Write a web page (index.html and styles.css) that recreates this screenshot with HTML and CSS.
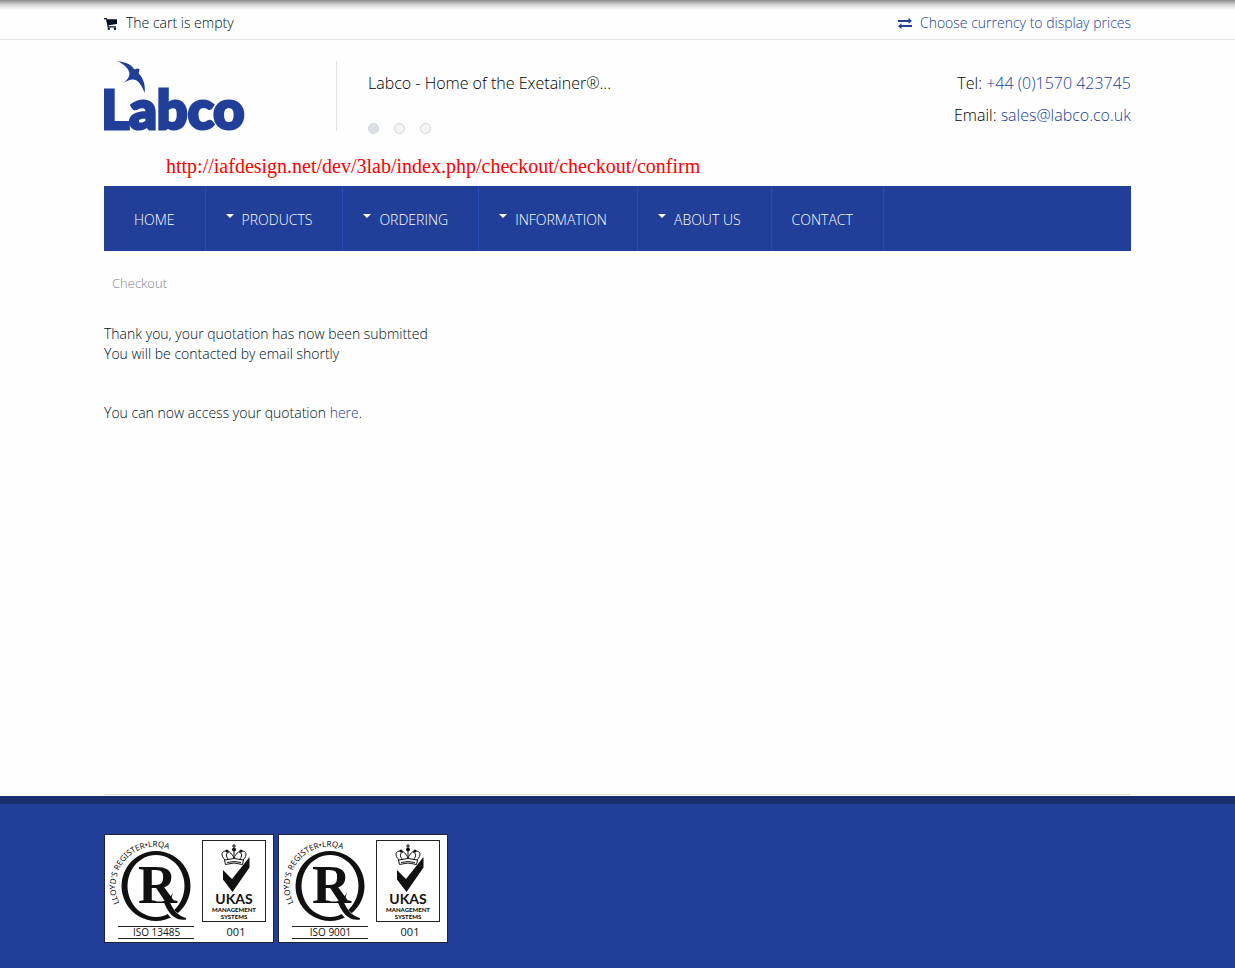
FILE: index.html
```html
<!DOCTYPE html>
<html lang="en">
<head>
  <meta charset="UTF-8">
  <meta name="viewport" content="width=device-width, initial-scale=1.0">
  <title>Checkout</title>
  <link rel="stylesheet" href="styles.css">
</head>
<body>

  <div class="top-bar">
    <div class="container top-inner">
      <div class="cart">
        <svg class="icon" viewBox="0 0 14 13" aria-hidden="true">
          <path d="M0 1h2.8l.4 1.2H13V7L4.600 8.200l.2 1H12v1.200H3.700L2 2.200H0z"/>
          <circle cx="4.8" cy="11.700" r="1.200"/>
          <circle cx="11" cy="11.700" r="1.200"/>
        </svg>
        <span>The cart is empty</span>
      </div>
      <a class="currency" href="#">
        <svg class="icon" viewBox="0 0 14 13" aria-hidden="true">
          <path d="M0 3h10.500V.8L14 4 10.500 6.800V5H0zM14 8H3.500V6.200L0 9.200l3.500 2.800V10H14z"/>
        </svg>
        <span>Choose currency to display prices</span>
      </a>
    </div>
  </div>

  <header class="container header">
    <a class="logo" href="#">
      <svg viewBox="0 0 160 80" width="160" height="80">
        <path d="M13 1c8 1 14 3 17 8 1 .5 2 .3 3-.5l2.500.5-.8 4.500c5 5 6.800 12 6 19.500-2-5-4.500-10-8-12.500-4-2-8-1-13.200 2.500 3-3 5.500-5 6-9C25 8 19 3.500 13 1z"/>
        <text class="logo-text" x="-3" y="69">Labco</text>
      </svg>
    </a>
    <div class="slider">
      <p>Labco - Home of the Exetainer®...</p>
      <div class="dots">
        <button class="dot active" type="button" aria-label="Slide 1"></button>
        <button class="dot" type="button" aria-label="Slide 2"></button>
        <button class="dot" type="button" aria-label="Slide 3"></button>
      </div>
    </div>
    <div class="contact">
      <p>Tel: <a href="tel:+441570423745">+44 (0)1570 423745</a></p>
      <p>Email: <a href="mailto:sales@labco.co.uk">sales@labco.co.uk</a></p>
    </div>
  </header>

  <div class="container">
    <p class="page-url">http://iafdesign.net/dev/3lab/index.php/checkout/checkout/confirm</p>

    <nav class="menu">
      <a class="first" href="#">HOME</a>
      <a href="#"><span class="caret"></span>PRODUCTS</a>
      <a href="#"><span class="caret"></span>ORDERING</a>
      <a href="#"><span class="caret"></span>INFORMATION</a>
      <a href="#"><span class="caret"></span>ABOUT US</a>
      <a href="#">CONTACT</a>
    </nav>

    <div class="breadcrumb">Checkout</div>
  </div>

  <main class="container content">
    <p>Thank you, your quotation has now been submitted<br>You will be contacted by email shortly</p>
    <p>You can now access your quotation <a href="#">here</a>.</p>
  </main>

  <footer>
    <div class="container badges">
      <svg class="badge" viewBox="0 0 170 109" width="170" height="109">
        <defs>
          <path id="arc" d="M15.500 69A39 39 0 0 1 68 17"/>
          <g id="mark">
            <rect class="frame" x=".5" y=".5" width="169" height="108"/>
            <text class="ring-text"><textPath href="#arc">LLOYD'S REGISTER•LRQA</textPath></text>
            <path fill-rule="evenodd" d="M52 17a34.500 35 0 1 0 .01 0zM52 21a28.500 31 0 1 1-.01 0z"/>
            <text class="letter-r" x="34" y="69">R</text>
            <path d="M36 67.500h20c6 0 9-2 13-9l-3 10.500H36z"/>
            <path class="tail-gap" d="M63 70.500c4 10 9 14 17 15"/>
            <path d="M60 68.500h6c3 7 8 13.500 16 15.500v1.500c-5 .5-8 0-11-2-5-3-8-8-11-15z"/>
            <path class="line" d="M14 92.500h76M14 104.500h76"/>
            <rect class="box" x="98.500" y="6.500" width="63" height="81"/>
            <path class="crown" d="M121 26c-5-5-3-9 1-9 4 0 6 3 8 7 2-4 4-7 8-7 4 0 6 4 1 9M125 26c-4-4-3-7 0-8M135 26c4-4 3-7 0-8M130 14v12M128 12h4M130 10v5"/>
            <path class="crown-band" d="M120.500 26q9.500-3 19 0l-1 4.500q-8.500-3-17 0z"/>
            <path class="crown" d="M123 28.500q7-2 14 0"/>
            <circle cx="130" cy="15.500" r="2"/>
            <circle cx="123" cy="17" r="1.500"/>
            <circle cx="137" cy="17" r="1.500"/>
            <path d="M119 36l9 9 17.500-22v10.500L128.500 58 119 45.500z"/>
            <text class="ukas" x="130" y="70">UKAS</text>
            <text class="mgmt" x="130" y="78">MANAGEMENT</text>
            <text class="mgmt" x="130" y="85">SYSTEMS</text>
            <text class="number" x="132" y="102">001</text>
          </g>
        </defs>
        <use href="#mark"/>
        <text class="iso" x="52.500" y="102">ISO 13485</text>
      </svg>
      <svg class="badge" viewBox="0 0 170 109" width="170" height="109">
        <use href="#mark"/>
        <text class="iso" x="52.500" y="102">ISO 9001</text>
      </svg>
    </div>
  </footer>

</body>
</html>
```

FILE: styles.css
```css
* {
  box-sizing: border-box;
  margin: 0;
  padding: 0;
}

body {
  min-height: 100vh;
  display: flex;
  flex-direction: column;
  font-family: "Open Sans", Arial, sans-serif;
  font-size: 14px;
  font-weight: 300;
  line-height: 20px;
  color: #001020;
  background: #fefefe;
}

a {
  color: #213f99;
  text-decoration: none;
}

.container {
  width: 100%;
  max-width: 1027px;
  margin: 0 auto;
}

.top-bar {
  height: 40px;
  padding-top: 3px;
  border-bottom: 1px solid #e5e5e5;
  background: linear-gradient(#8c8c8c, #d8d8d8 5px, #fefefe 10px);
}

.top-inner {
  display: flex;
  justify-content: space-between;
  align-items: center;
  height: 40px;
}

.cart,
.currency {
  display: flex;
  align-items: center;
  gap: 8px;
}

.icon {
  width: 14px;
  height: 13px;
  fill: currentColor;
}

.header {
  display: flex;
  height: 112px;
  padding-top: 20px;
  font-size: 16px;
  color: #000;
}

.logo {
  width: 232px;
  fill: #213f99;
}

.logo-text {
  font-family: Lato, sans-serif;
  font-size: 54px;
  font-weight: 900;
  stroke: #213f99;
  stroke-width: 3px;
}

.slider {
  height: 70px;
  margin-top: 1px;
  padding: 12px 0 0 31px;
  border-left: 1px solid #e5e5e5;
}

.dots {
  display: flex;
  gap: 15px;
  margin-top: 30px;
}

.dot {
  width: 11px;
  height: 11px;
  border: 1px solid #cfd4da;
  border-radius: 50%;
  background: #f5f5f6;
}

.dot.active {
  background: #dde1e7;
}

.contact {
  margin-left: auto;
  padding-top: 7px;
  line-height: 32px;
  text-align: right;
}

.page-url {
  padding: 4px 62px 0;
  height: 34px;
  font-family: "Liberation Serif", "Times New Roman", serif;
  font-size: 20px;
  font-weight: 400;
  color: #f00;
}

.menu {
  display: flex;
  height: 65px;
  background: #213f99;
}

.menu a {
  display: flex;
  align-items: center;
  padding: 2px 30px 0 20px;
  border-right: 1px solid #274bb0;
  color: #fff;
}

.menu .first {
  padding-left: 30px;
}

.caret {
  margin: -8px 8px 0 0;
  border: 4px solid transparent;
  border-top-color: #fff;
  border-bottom: 0;
}

.breadcrumb {
  padding: 22px 8px 0;
  font-size: 13px;
  color: #888;
}

.content {
  flex: 1;
  padding-top: 31px;
  border-bottom: 1px solid #dcdcdf;
}

.content p {
  margin-bottom: 39px;
}

footer {
  margin-top: 1px;
  padding: 30px 0 25px;
  border-top: 8px solid #1a2e6e;
  background: #213f99;
}

.badges {
  display: flex;
  gap: 4px;
}

.badge {
  font-family: "Open Sans", sans-serif;
  font-weight: 500;
  fill: #111;
}

.frame {
  fill: #fff;
  stroke: #223;
}

.ring-text {
  font-family: "Noto Sans", sans-serif;
  font-size: 8px;
  font-weight: 400;
}

.letter-r {
  font-family: "Liberation Serif", serif;
  font-size: 54px;
  font-weight: 700;
}

.tail-gap {
  fill: none;
  stroke: #fff;
  stroke-width: 8px;
}

.line,
.box {
  fill: none;
  stroke: #222;
}

.crown {
  fill: none;
  stroke: #111;
  stroke-width: 1px;
}

.crown-band {
  fill: #fff;
  stroke: #111;
}

.ukas,
.mgmt,
.number,
.iso {
  text-anchor: middle;
}

.ukas {
  font-family: Lato, sans-serif;
  font-size: 14px;
  font-weight: 700;
}

.mgmt {
  font-family: Lato, sans-serif;
  font-size: 6px;
  font-weight: 900;
}

.iso {
  font-size: 10px;
}

.number {
  font-size: 11px;
}
```
